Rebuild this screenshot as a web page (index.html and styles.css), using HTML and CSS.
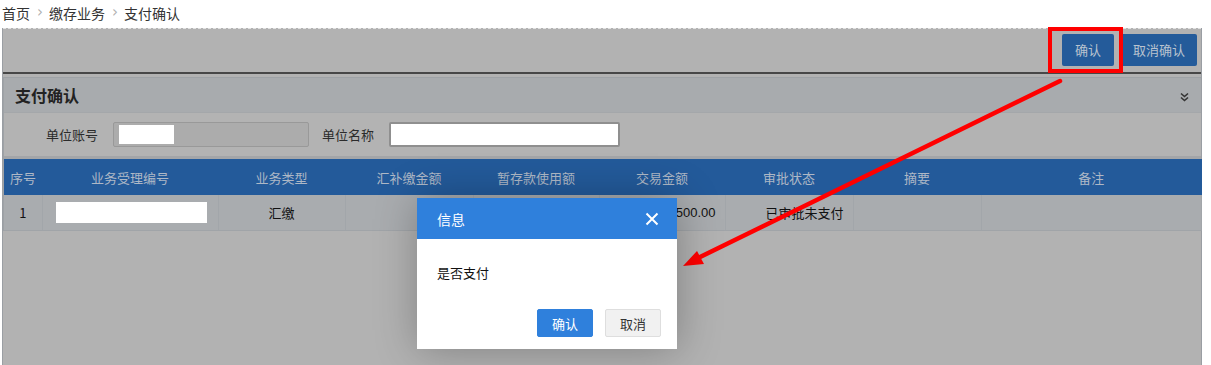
FILE: index.html
```html
<!DOCTYPE html>
<html lang="zh-CN">
<head>
<meta charset="utf-8">
<title>支付确认</title>
<link rel="stylesheet" href="styles.css">
</head>
<body>
<div class="crumb">
  <span>首页</span><span class="sep">›</span><span>缴存业务</span><span class="sep">›</span><span>支付确认</span>
</div>
<div class="frame">
  <div class="toolbar">
    <button class="tbtn">确认</button>
    <button class="tbtn">取消确认</button>
  </div>
  <div class="panel">
    <div class="ptitle">
      <span>支付确认</span>
      <svg class="chev" width="9" height="10" viewBox="0 0 9 10"><path d="M1 1.5 L4.5 4.5 L8 1.5 M1 5.5 L4.5 8.5 L8 5.5" fill="none" stroke="#333" stroke-width="1.6"/></svg>
    </div>
    <div class="search">
      <label class="lbl">单位账号</label>
      <div class="inp inp-dis"><span class="redact"></span></div>
      <label class="lbl lbl2">单位名称</label>
      <div class="inp inp-name"></div>
    </div>
    <table class="grid">
      <colgroup>
        <col style="width:38px"><col style="width:176px"><col style="width:127px"><col style="width:128px"><col style="width:126px"><col style="width:126px"><col style="width:128px"><col style="width:128px"><col>
      </colgroup>
      <thead>
        <tr><th>序号</th><th>业务受理编号</th><th>业务类型</th><th>汇补缴金额</th><th>暂存款使用额</th><th>交易金额</th><th>审批状态</th><th>摘要</th><th>备注</th></tr>
      </thead>
      <tbody>
        <tr>
          <td>1</td>
          <td class="left"><span class="redact2"></span></td>
          <td>汇缴</td>
          <td></td>
          <td></td>
          <td class="amt">1,500.00</td>
          <td class="status">已审批未支付</td>
          <td></td>
          <td></td>
        </tr>
      </tbody>
    </table>
  </div>
</div>

<div class="hilite"></div>
<svg class="arrow" width="1211" height="365" viewBox="0 0 1211 365">
  <line x1="1060" y1="81" x2="696" y2="259" stroke="#ff0000" stroke-width="4.5" stroke-linecap="round"/>
  <polygon points="683,266 697,251 704,264" fill="#ff0000"/>
</svg>

<div class="dialog">
  <div class="dhead">
    <span>信息</span>
    <svg class="close" width="14" height="14" viewBox="0 0 14 14"><path d="M1.5 1.5 L12.5 12.5 M12.5 1.5 L1.5 12.5" stroke="#fff" stroke-width="2"/></svg>
  </div>
  <div class="dbody">是否支付</div>
  <div class="dfoot">
    <button class="dbtn ok">确认</button>
    <button class="dbtn cancel">取消</button>
  </div>
</div>
</body>
</html>
```
FILE: styles.css
```css
* { box-sizing: border-box; }
html, body { margin: 0; padding: 0; background: #fff; }
body {
  width: 1211px;
  height: 365px;
  overflow: hidden;
  position: relative;
  font-family: "Noto Sans CJK SC", "Liberation Sans", sans-serif;
  font-size: 13px;
  color: #333;
}
.crumb {
  height: 28px;
  padding-left: 2px;
  display: flex;
  align-items: center;
  font-size: 14px;
  color: #333;
  line-height: 1;
  padding-bottom: 3px;
}
.crumb .sep {
  color: #b0b0b0;
  margin: 0 6px 0 7px;
  font-family: "DejaVu Sans", sans-serif;
  font-size: 15px;
}
.frame {
  margin-left: 2px;
  width: 1200px;
  height: 337px;
  background: #b2b2b2;
  border-left: 1px solid #9a9ea3;
  border-right: 1px solid #9a9ea3;
  position: relative;
}
.toolbar {
  height: 46px;
  border-top: 1px dashed #e2e2e2;
  border-bottom: 2px solid #474747;
  display: flex;
  justify-content: flex-end;
  align-items: center;
  gap: 7px;
  padding-right: 4px;
  padding-bottom: 2px;
}
.tbtn {
  height: 32px;
  border: 0;
  border-radius: 2px;
  background: #245b9a;
  color: #b9c3cf;
  font-family: inherit;
  font-size: 13px;
  padding: 0 12px;
  min-width: 52px;
}
.panel {
  margin-top: 3px;
  border-top: 1px solid #9ea2a6;
  border-left: 1px solid #9ea2a6;
}
.ptitle {
  height: 34px;
  background: #a8abae;
  display: flex;
  align-items: center;
  justify-content: space-between;
  padding: 0 12px 0 11px;
  font-size: 16px;
  font-weight: bold;
  color: #222;
}
.chev { margin-top: 3px; }
.search {
  height: 47px;
  background: #b3b3b3;
  border-top: 1px solid #a4a7aa;
  border-bottom: 3px solid #a3a5a8;
  display: flex;
  align-items: center;
  padding-left: 42px;
}
.lbl { color: #2b2b2b; font-size: 13px; }
.lbl2 { margin-left: 13px; }
.inp {
  height: 25px;
  border: 1px solid #999;
  border-radius: 2px;
  margin-left: 15px;
  display: flex;
  align-items: center;
}
.inp-dis {
  width: 196px;
  background: #acacac;
  padding-left: 5px;
}
.redact {
  display: block;
  width: 55px;
  height: 19px;
  background: #fff;
}
.inp-name {
  width: 231px;
  background: #fff;
  border-color: #8f8f8f;
  border-width: 2px;
}
.grid {
  width: 1198px;
  border-collapse: collapse;
  table-layout: fixed;
}
.grid th {
  height: 36px;
  background: #235a9a;
  color: #aeb8c6;
  font-weight: normal;
  font-size: 13px;
  text-align: center;
  padding: 0;
}
.grid td {
  height: 35px;
  background: #a9acaf;
  border-right: 1px solid #a2a6aa;
  border-bottom: 1px solid #a0a4a8;
  color: #111;
  font-size: 13px;
  text-align: center;
  padding: 0;
  font-family: "Noto Sans CJK SC", "Liberation Sans", sans-serif;
}
.grid td.left { text-align: left; padding-left: 13px; }
.redact2 {
  display: block;
  width: 151px;
  height: 21px;
  background: #fff;
  margin-top: 0;
}
.grid td.amt { text-align: right; padding-right: 9px; font-family: "Liberation Sans", sans-serif; }
.grid td.status { text-align: left; padding-left: 40px; }

.hilite {
  position: absolute;
  left: 1048px;
  top: 27px;
  width: 75px;
  height: 46px;
  border: 4px solid #ff0000;
}
.arrow {
  position: absolute;
  left: 0;
  top: 0;
  pointer-events: none;
}
.dialog {
  position: absolute;
  left: 417px;
  top: 198px;
  width: 260px;
  height: 151px;
  background: #fff;
  box-shadow: 1px 1px 40px rgba(0, 0, 0, 0.28);
  display: flex;
  flex-direction: column;
}
.dhead {
  height: 41px;
  background: #2f80dc;
  color: #fff;
  font-size: 14px;
  display: flex;
  align-items: center;
  justify-content: space-between;
  padding: 0 18px 0 20px;
}
.dbody {
  padding: 24px 20px 0 20px;
  height: 70px;
  font-size: 13px;
  color: #111;
}
.dfoot {
  display: flex;
  justify-content: flex-end;
  gap: 12px;
  padding-right: 16px;
}
.dbtn {
  width: 56px;
  height: 28px;
  border-radius: 2px;
  font-family: inherit;
  font-size: 13px;
  padding: 0;
}
.dbtn.ok { background: #2f80dc; border: 1px solid #2f80dc; color: #fff; }
.dbtn.cancel { background: #f1f1f1; border: 1px solid #dedede; color: #333; }
```
